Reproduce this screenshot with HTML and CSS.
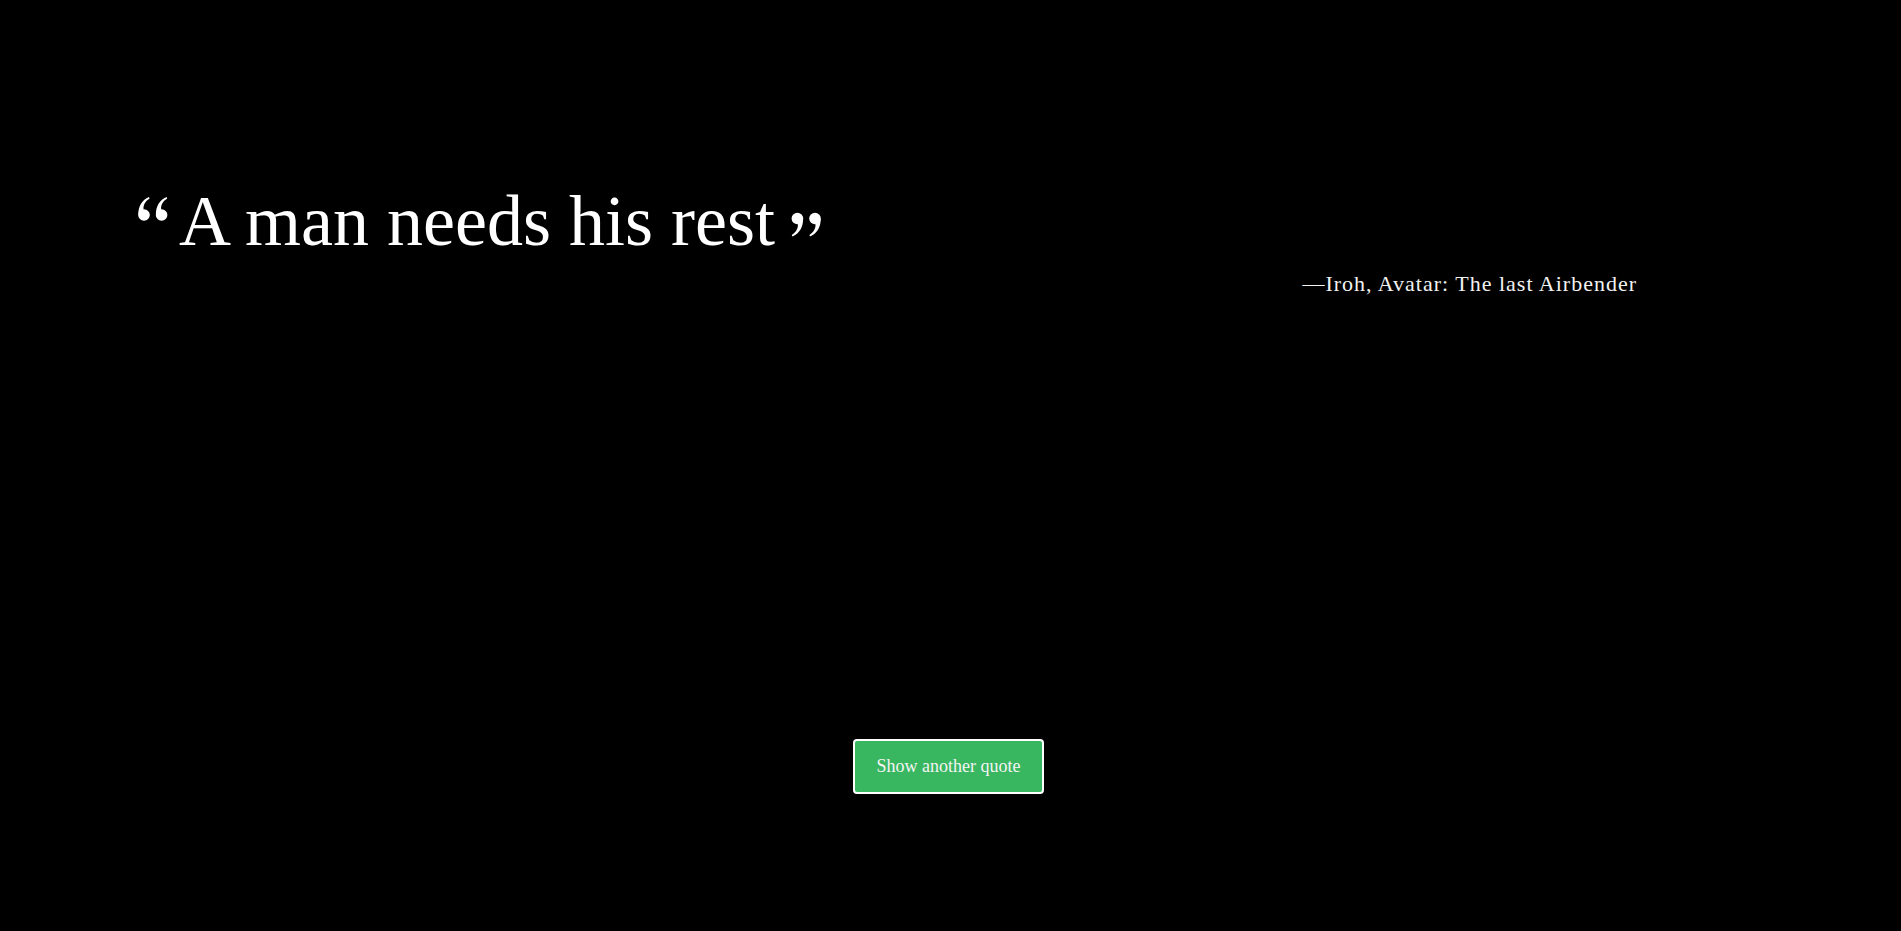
FILE: index.html
```html
<!DOCTYPE html>
<html lang="en">
<head>
<meta charset="utf-8">
<title>Random Quote</title>
<link rel="stylesheet" href="styles.css">
</head>
<body>
<main class="page">
  <section class="quote-box">
    <blockquote class="quote">
      <span class="qmark qmark-open" aria-hidden="true">
        <svg width="30" height="24" viewBox="0 0 30 24"><g fill="#fff"><circle cx="6" cy="18" r="5.8"/><path d="M0.3 18 C0.2 9 4 3 11 0 L11.6 1.6 C7 4.5 5 8.5 5.6 12.4 Z"/><circle cx="23.6" cy="18" r="5.8"/><path d="M17.9 18 C17.8 9 21.6 3 28.6 0 L29.2 1.6 C24.6 4.5 22.6 8.5 23.2 12.4 Z"/></g></svg>
      </span>
      <span class="quote-text">A man needs his rest</span>
      <span class="qmark qmark-close" aria-hidden="true">
        <svg width="30" height="25" viewBox="0 0 30 24"><g fill="#fff" transform="rotate(180 15 12)"><circle cx="6" cy="18" r="5.8"/><path d="M0.3 18 C0.2 9 4 3 11 0 L11.6 1.6 C7 4.5 5 8.5 5.6 12.4 Z"/><circle cx="23.6" cy="18" r="5.8"/><path d="M17.9 18 C17.8 9 21.6 3 28.6 0 L29.2 1.6 C24.6 4.5 22.6 8.5 23.2 12.4 Z"/></g></svg>
      </span>
    </blockquote>
    <p class="author">—Iroh, Avatar: The last Airbender</p>
  </section>
  <div class="actions">
    <button class="btn-new" type="button">Show another quote</button>
  </div>
</main>
</body>
</html>
```
FILE: styles.css
```css
html, body {
  margin: 0;
  padding: 0;
  background: #000;
  height: 100%;
}

body {
  font-family: "Liberation Serif", "Times New Roman", serif;
  color: #fff;
}

.page {
  display: flex;
  flex-direction: column;
  min-height: 100%;
}

.quote-box {
  display: flex;
  flex-direction: column;
  padding: 185px 264px 0 138px;
}

.quote {
  display: flex;
  align-items: flex-start;
  margin: 0;
}

.quote-text {
  font-size: 72px;
  line-height: 72px;
  color: #fff;
}

.qmark {
  display: flex;
}

.qmark-open {
  margin: 12px 11px 0 0;
}

.qmark-close {
  margin: 27px 0 0 16px;
}

.author {
  margin: 14px 0 0;
  align-self: flex-end;
  font-size: 22px;
  line-height: 26px;
  letter-spacing: 1px;
  color: #f2f2f2;
}

.actions {
  display: flex;
  justify-content: center;
  margin-top: 442px;
  padding-right: 4px;
}

.btn-new {
  height: 55px;
  padding: 0 22px;
  border: 2px solid #fff;
  border-radius: 4px;
  background: #38b660;
  color: #f4f4f4;
  font-family: "Liberation Serif", "Times New Roman", serif;
  font-size: 18px;
  cursor: pointer;
}
```
